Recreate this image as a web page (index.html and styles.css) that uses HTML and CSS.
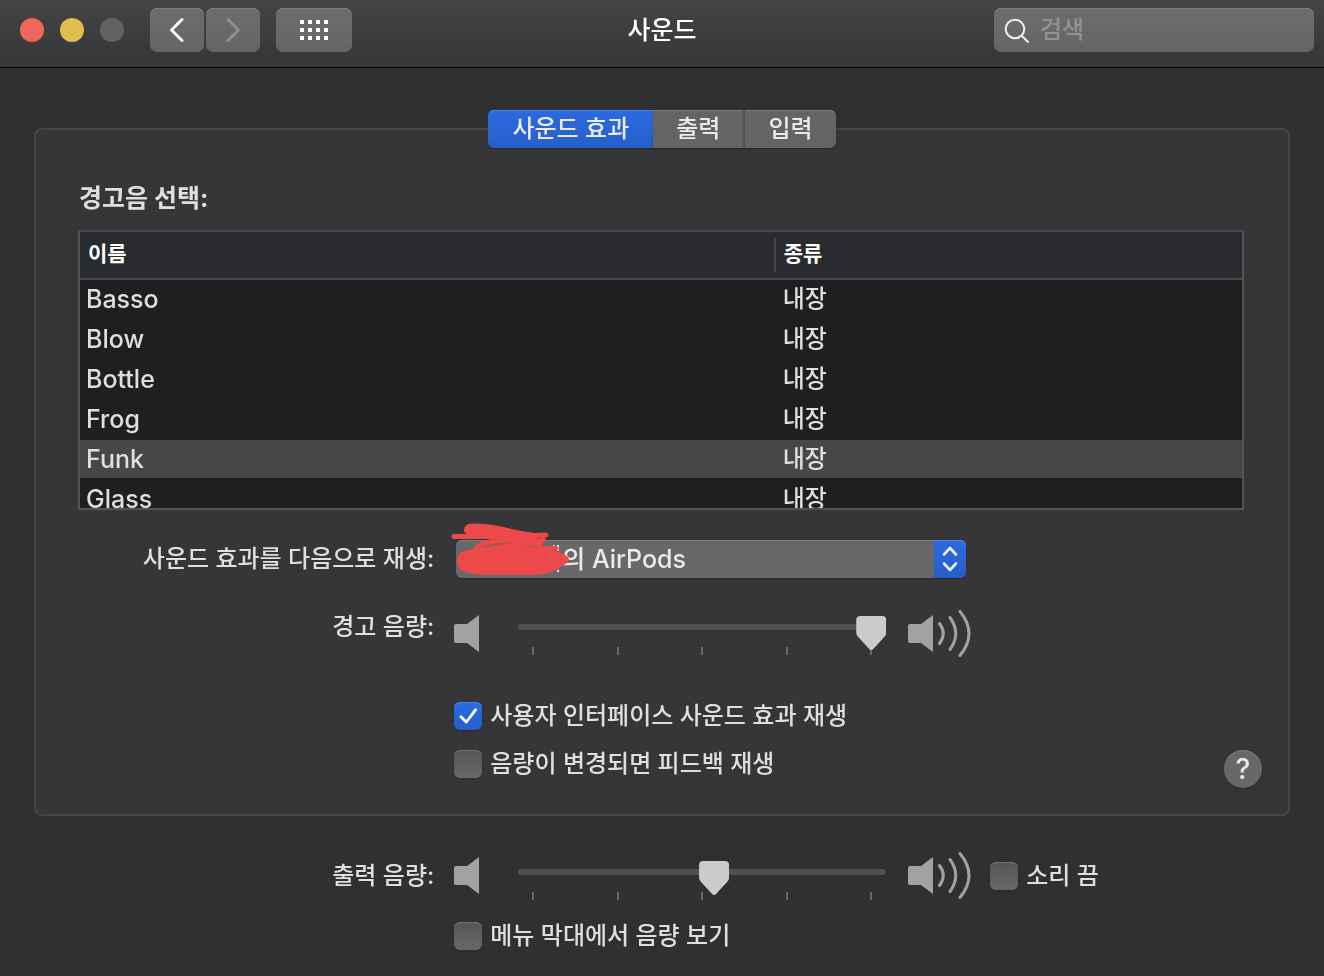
FILE: index.html
```html
<!DOCTYPE html>
<html lang="ko">
<head>
    <meta charset="UTF-8">
    <meta name="viewport" content="width=device-width, initial-scale=1.0">
    <title>사운드</title>
    <link rel="stylesheet" href="styles.css">
</head>
<body>
    <header class="titlebar">
        <div class="titlebar-left">
            <div class="window-buttons">
                <button type="button" class="dot red" aria-label="닫기"></button>
                <button type="button" class="dot yellow" aria-label="최소화"></button>
                <button type="button" class="dot" aria-label="확대" disabled></button>
            </div>
            <div class="nav-buttons">
                <button type="button" class="tool-btn" aria-label="뒤로">
                    <svg width="16" height="26" viewBox="0 0 16 26"><path d="M13 2.5 2.5 13 13 23.5" fill="none" stroke="#fff" stroke-width="3" stroke-linecap="round" stroke-linejoin="round"/></svg>
                </button>
                <button type="button" class="tool-btn" aria-label="앞으로" disabled>
                    <svg width="16" height="26" viewBox="0 0 16 26"><path d="M3 2.5 13.5 13 3 23.5" fill="none" stroke="#8f9092" stroke-width="3" stroke-linecap="round" stroke-linejoin="round"/></svg>
                </button>
            </div>
            <button type="button" class="tool-btn wide" aria-label="모두 보기">
                <svg width="28" height="20" viewBox="0 0 28 20" fill="#fff">
                    <path d="M0 0h4v4H0zM8 0h4v4H8zM16 0h4v4h-4zM24 0h4v4h-4zM0 8h4v4H0zM8 8h4v4H8zM16 8h4v4h-4zM24 8h4v4h-4zM0 16h4v4H0zM8 16h4v4H8zM16 16h4v4h-4zM24 16h4v4h-4z"/>
                </svg>
            </button>
        </div>
        <h1>사운드</h1>
        <label class="search">
            <svg width="26" height="26" viewBox="0 0 26 26" fill="none" stroke="#f0f0f0" stroke-width="2"><circle cx="11" cy="12" r="9.300"/><path d="m17.500 18.500 7 7"/></svg>
            <input type="search" placeholder="검색" aria-label="검색">
        </label>
    </header>

    <main>
        <section class="panel">
            <nav class="tabs">
                <button type="button" class="tab active">사운드 효과</button>
                <button type="button" class="tab">출력</button>
                <button type="button" class="tab">입력</button>
            </nav>

            <div class="alerts">
                <h2>경고음 선택:</h2>
                <div class="table-box">
                    <table>
                        <thead>
                            <tr><th scope="col">이름</th><th scope="col">종류</th></tr>
                        </thead>
                        <tbody>
                            <tr><td>Basso</td><td>내장</td></tr>
                            <tr><td>Blow</td><td>내장</td></tr>
                            <tr><td>Bottle</td><td>내장</td></tr>
                            <tr><td>Frog</td><td>내장</td></tr>
                            <tr class="selected"><td>Funk</td><td>내장</td></tr>
                            <tr><td>Glass</td><td>내장</td></tr>
                        </tbody>
                    </table>
                </div>
            </div>

            <div class="panel-bottom">
                <div class="settings">
                    <label class="name" for="device">사운드 효과를 다음으로 재생:</label>
                    <div class="device">
                        <select id="device">
                            <option>의 AirPods</option>
                        </select>
                        <span class="arrows">
                            <svg width="16" height="26" viewBox="0 0 16 26" fill="none" stroke="#e8eefb" stroke-width="2.600" stroke-linecap="round" stroke-linejoin="round"><path d="M2 8.500 8 2l6 6.500M2 17.500 8 24l6-6.500"/></svg>
                        </span>
                        <svg class="scribble" width="120" height="54" viewBox="0 0 120 54">
                            <path d="M26 27 31 26M100 29v-2M103 22v6M107 22v6M107 47v2" stroke="#dfdfe0" stroke-width="2" fill="none"/>
                            <path d="M9 30C13 28 18 26 23 27L40 24 105 23Q109 24 107 27L104 28 110 30Q118 33 118 37C118 41 111 41 107 46C100 50 94 51 85 52H42C30 52 20 52 12 48C5 46 5 34 9 30Z" fill="#ed484a"/>
                            <path d="M18 1C35-1 55 5 70 8C80 9 88 11 89 14L70 19 42 17C30 14 15 14 13 8Q13 2 18 1Z" fill="#ed484a"/>
                            <path d="M3 13.500H60L95 12M24 27C28 20 40 17 67 17M92 16C93 22 60 20 27 28M60 15 90 18 88 24" fill="none" stroke="#ed484a" stroke-width="5" stroke-linecap="round"/>
                        </svg>
                    </div>

                    <label class="name volume-name" for="alert-volume">경고 음량:</label>
                    <div class="volume">
                        <svg class="speaker" width="26" height="48" viewBox="0 0 26 48"><path d="M2 14h11L25 5v37L13 33H2a2 2 0 0 1-2-2V16a2 2 0 0 1 2-2z"/></svg>
                        <div class="slider">
                            <div class="ticks"><i></i><i></i><i></i><i></i><i></i></div>
                            <input type="range" id="alert-volume" min="0" max="100" value="100">
                        </div>
                        <svg class="speaker" width="64" height="48" viewBox="0 0 64 48">
                            <path d="M2 14h11L25 5v37L13 33H2a2 2 0 0 1-2-2V16a2 2 0 0 1 2-2z"/>
                            <path class="wave" d="M31.500 13.500Q39 23.500 31.500 33.500M42 7.500Q53.500 23.500 42 39.500M52 1.500Q70 23.500 52 45.500"/>
                        </svg>
                    </div>

                    <div class="checks">
                        <label class="check"><input type="checkbox" checked>사용자 인터페이스 사운드 효과 재생</label>
                        <label class="check"><input type="checkbox">음량이 변경되면 피드백 재생</label>
                    </div>
                </div>
                <button type="button" class="help" aria-label="도움말">?</button>
            </div>
        </section>

        <section class="settings output">
            <label class="name" for="output-volume">출력 음량:</label>
            <div class="volume">
                <svg class="speaker" width="26" height="48" viewBox="0 0 26 48"><path d="M2 14h11L25 5v37L13 33H2a2 2 0 0 1-2-2V16a2 2 0 0 1 2-2z"/></svg>
                <div class="slider">
                    <div class="ticks"><i></i><i></i><i></i><i></i><i></i></div>
                    <input type="range" id="output-volume" min="0" max="1000" value="535">
                </div>
                <svg class="speaker" width="64" height="48" viewBox="0 0 64 48">
                    <path d="M2 14h11L25 5v37L13 33H2a2 2 0 0 1-2-2V16a2 2 0 0 1 2-2z"/>
                    <path class="wave" d="M31.500 13.500Q39 23.500 31.500 33.500M42 7.500Q53.500 23.500 42 39.500M52 1.500Q70 23.500 52 45.500"/>
                </svg>
                <label class="check mute"><input type="checkbox">소리 끔</label>
            </div>
            <div class="checks">
                <label class="check"><input type="checkbox">메뉴 막대에서 음량 보기</label>
            </div>
        </section>
    </main>
</body>
</html>
```
FILE: styles.css
```css
* {
    box-sizing: border-box;
}

body {
    margin: 0;
    min-height: 100vh;
    background-color: #2f3031;
    color: #dfdfe0;
    font-family: Inter, "Noto Sans CJK KR", sans-serif;
    font-size: 24px;
    font-weight: 500;
    line-height: 28px;
}

button, input, select {
    font: inherit;
    color: inherit;
    margin: 0;
    padding: 0;
    border: none;
}

svg {
    display: block;
    flex: none;
}

/* Title bar */
.titlebar {
    display: grid;
    grid-template-columns: 1fr auto 1fr;
    align-items: center;
    padding: 8px 10px 15px;
    background: linear-gradient(#434445, #353637);
    border-bottom: 1px solid #000;
}

.titlebar h1 {
    margin: 0;
    font-size: 25px;
    font-weight: 500;
    color: #fff;
}

.titlebar-left {
    display: flex;
    align-items: center;
    gap: 16px;
    padding-left: 10px;
}

.window-buttons {
    display: flex;
    gap: 16px;
    margin-right: 10px;
}

.dot {
    width: 24px;
    height: 24px;
    border-radius: 50%;
    background-color: #616264;
}

.red {
    background-color: #ee675b;
}

.yellow {
    background-color: #e0c04c;
}

.nav-buttons {
    display: flex;
    gap: 2px;
}

.tool-btn {
    display: flex;
    justify-content: center;
    align-items: center;
    width: 54px;
    height: 44px;
    border-radius: 7px;
    background: linear-gradient(#6c6d6f, #646567);
    box-shadow: inset 0 1px #7e7f81;
}

.tool-btn.wide {
    width: 76px;
}

.search {
    display: flex;
    align-items: center;
    justify-self: end;
    gap: 10px;
    width: 320px;
    height: 44px;
    padding: 0 10px;
    border-radius: 7px;
    background: linear-gradient(#6c6d6f, #646567);
    box-shadow: inset 0 1px #7e7f81;
}

.search input {
    flex: 1;
    min-width: 0;
    height: 40px;
    padding-bottom: 2px;
    background: none;
    outline: none;
}

.search input::placeholder {
    color: #919294;
}

/* Panel */
.panel {
    margin: 60px 34px 0;
    padding: 0 26px 26px;
    border: 2px solid #444546;
    border-radius: 8px;
    background-color: #363638;
}

.tabs {
    display: flex;
    justify-content: center;
    margin-top: -20px;
}

.tab {
    height: 38px;
    padding: 0 23px;
    background-color: #646466;
    box-shadow: inset 0 1px #7a7a7c, 0 1px 1px #29292a;
    color: #eaeaeb;
}

.tab + .tab + .tab {
    border-left: 2px solid #525254;
}

.tab:first-child {
    padding: 0 24px;
    border-radius: 6px 0 0 6px;
}

.tab:last-child {
    border-radius: 0 6px 6px 0;
}

.tab.active {
    background: linear-gradient(#2b6ae0, #265fc8);
    box-shadow: inset 0 1px #5183e2, 0 1px 1px #29292a;
}

.alerts {
    margin: 36px 18px 30px 16px;
}

.alerts h2 {
    margin: 0 1px 18px;
    font-size: 25px;
    font-weight: 700;
}

.table-box {
    height: 280px;
    overflow-y: auto;
    scrollbar-width: none;
    border: 2px solid #535456;
    border-top-color: #47484a;
    background-color: #1e1f21;
}

table {
    width: 100%;
    table-layout: fixed;
    border-collapse: separate;
    border-spacing: 0;
}

th {
    position: sticky;
    top: 0;
    height: 48px;
    padding: 0 8px 2px;
    border-bottom: 2px solid #47484a;
    background: #2a2b2f;
    color: #fff;
    font-size: 21px;
    font-weight: 600;
    text-align: left;
}

th:first-child {
    width: 59.7%;
}

th:last-child {
    padding-left: 10px;
    background: linear-gradient(#47484a, #47484a) no-repeat 0 6px / 2px 34px #2a2b2f;
}

td {
    height: 40px;
    padding: 0 9px;
    border-bottom: 2px solid transparent;
    background-clip: padding-box;
}

td:first-child {
    padding-left: 6px;
    font-size: 25px;
}

.selected td {
    background-color: #474747;
}

/* Settings under the table, the help button shares their cell */
.panel-bottom {
    display: grid;
}

.panel-bottom > * {
    grid-area: 1 / 1;
}

.settings {
    display: grid;
    grid-template-columns: 31fr 69fr;
    column-gap: 20px;
    padding: 0 17px 10px;
}

.name {
    align-self: center;
    text-align: right;
    white-space: nowrap;
}

.device {
    position: relative;
    display: flex;
    width: 510px;
    margin-left: 2px;
}

.device select {
    width: 100%;
    height: 38px;
    padding-left: 106px;
    border-radius: 6px;
    appearance: none;
    background-color: #68686a;
    box-shadow: inset 0 1px #7e7e80, 0 1px 1px #29292a;
    color: #eaeaeb;
    font-size: 25px;
}

.arrows {
    position: absolute;
    top: 0;
    right: 0;
    display: flex;
    justify-content: center;
    align-items: center;
    width: 32px;
    height: 38px;
    border-radius: 0 6px 6px 0;
    background: linear-gradient(#2b6ae0, #265fc8);
    box-shadow: inset 0 1px #5183e2;
    pointer-events: none;
}

.scribble {
    position: absolute;
    top: -17px;
    left: -5px;
    pointer-events: none;
}

.volume {
    display: flex;
    align-items: center;
}

.panel .volume {
    margin-top: 32px;
}

.volume-name {
    margin-top: 18px;
}

.speaker {
    fill: #a2a2a4;
}

.wave {
    fill: none;
    stroke: #a2a2a4;
    stroke-width: 3;
    stroke-linecap: round;
}

.slider {
    display: grid;
    width: 368px;
    height: 40px;
    margin: 2px 22px 0 38px;
}

.slider > * {
    grid-area: 1 / 1;
}

.ticks {
    display: flex;
    justify-content: space-between;
    align-self: end;
    padding: 0 14px;
}

.ticks i {
    width: 2px;
    height: 8px;
    background-color: #68686a;
}

input[type="range"] {
    width: 100%;
    height: 6px;
    margin-top: 9px;
    border-radius: 3px;
    appearance: none;
    background-color: #515153;
}

input[type="range"]::-webkit-slider-thumb {
    width: 30px;
    height: 34px;
    appearance: none;
    background-color: #cbcbcc;
    clip-path: path("M4 0H26Q30 0 30 4V17Q30 19 28 21L17 33Q15 35 13 33L2 21Q0 19 0 17V4Q0 0 4 0Z");
    transform: translateY(6px);
}

.checks {
    grid-column: 2;
    display: grid;
    justify-items: start;
    gap: 20px;
    margin-top: 44px;
}

.check {
    display: flex;
    align-items: center;
    gap: 8px;
    white-space: nowrap;
}

.check input {
    width: 28px;
    height: 28px;
    border-radius: 6px;
    appearance: none;
    background: linear-gradient(#555557, #69696b);
    box-shadow: inset 0 1px #777779, 0 1px 2px #29292a;
}

.check input:checked {
    background: linear-gradient(#2b6ae0, #265fc8);
    box-shadow: inset 0 1px #5183e2, 0 1px 2px #29292a;
}

.check input:checked::before {
    content: "";
    display: block;
    width: 28px;
    height: 28px;
    background-color: #fff;
    clip-path: path("M5 15Q6 12 8 14L12 18 20 7Q22 5 23 8L13 21Q12 22 11 21Z");
}

.help {
    place-self: end;
    width: 38px;
    height: 38px;
    border-radius: 50%;
    background-color: #68686a;
    box-shadow: inset 0 1px #7a7a7c, 0 1px 2px #29292a;
    color: #eaeaeb;
    font-size: 28px;
}

/* Output volume */
.output {
    margin: 36px 62px 0;
}

.output .slider {
    margin-top: 8px;
}

.mute {
    margin-left: 18px;
}

.output .checks {
    margin-top: 22px;
}
```
